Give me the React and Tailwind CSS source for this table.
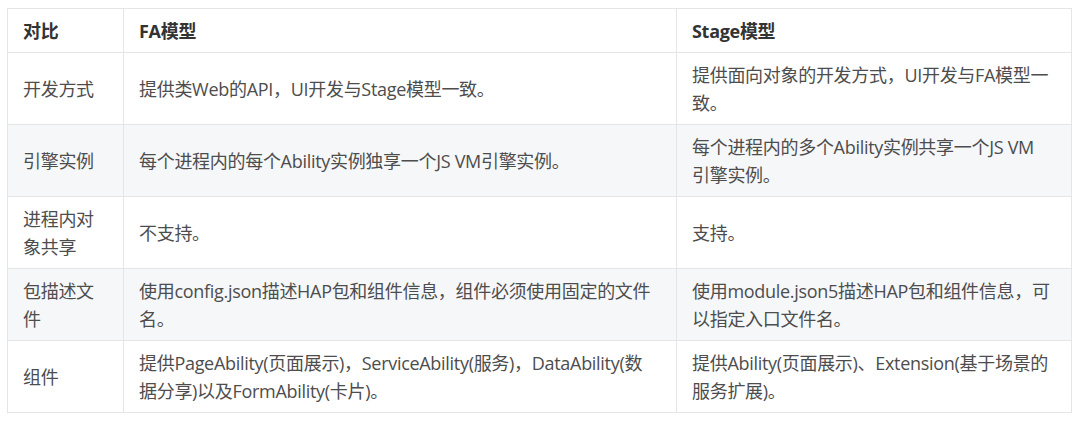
import React from 'react'

// line breaks follow the reference wrapping
const rows = [
  ['开发方式', '提供类Web的API，UI开发与Stage模型一致。', '提供面向对象的开发方式，UI开发与FA模型一\n致。'],
  ['引擎实例', '每个进程内的每个Ability实例独享一个JS VM引擎实例。', '每个进程内的多个Ability实例共享一个JS VM\n引擎实例。'],
  ['进程内对\n象共享', '不支持。', '支持。'],
  ['包描述文\n件', '使用config.json描述HAP包和组件信息，组件必须使用固定的文件\n名。', '使用module.json5描述HAP包和组件信息，可\n以指定入口文件名。'],
  ['组件', '提供PageAbility(页面展示)，ServiceAbility(服务)，DataAbility(数\n据分享)以及FormAbility(卡片)。', '提供Ability(页面展示)、Extension(基于场景的\n服务扩展)。'],
]

export default function App() {
  return (
    <div className="w-[1080px] h-[424px] bg-white pt-[8px] pl-[7px] font-['Open_Sans','Noto_Sans_CJK_SC',sans-serif] text-[18px] leading-[28px] tracking-[-0.3px]">
      <table className="w-[1064px] table-fixed border-collapse">
        <colgroup>
          <col className="w-[116px]" />
          <col className="w-[553px]" />
          <col className="w-[395px]" />
        </colgroup>
        <thead>
          <tr className="h-[44px]">
            {['对比', 'FA模型', 'Stage模型'].map((h) => (
              <th
                key={h}
                className="border border-[#e3e5e8] px-[15px] py-[7px] text-left font-bold text-[#333333]"
              >
                {h}
              </th>
            ))}
          </tr>
        </thead>
        <tbody>
          {rows.map((r, i) => (
            <tr key={i} className={i % 2 === 1 ? 'h-[72px] bg-[#f6f7f9]' : 'h-[72px] bg-white'}>
              {r.map((c, j) => (
                <td
                  key={j}
                  className="border border-[#e3e5e8] pl-[15px] pr-[8px] py-[7px] align-middle whitespace-pre-line text-[#4d4d4d]"
                >
                  {c}
                </td>
              ))}
            </tr>
          ))}
        </tbody>
      </table>
    </div>
  )
}
